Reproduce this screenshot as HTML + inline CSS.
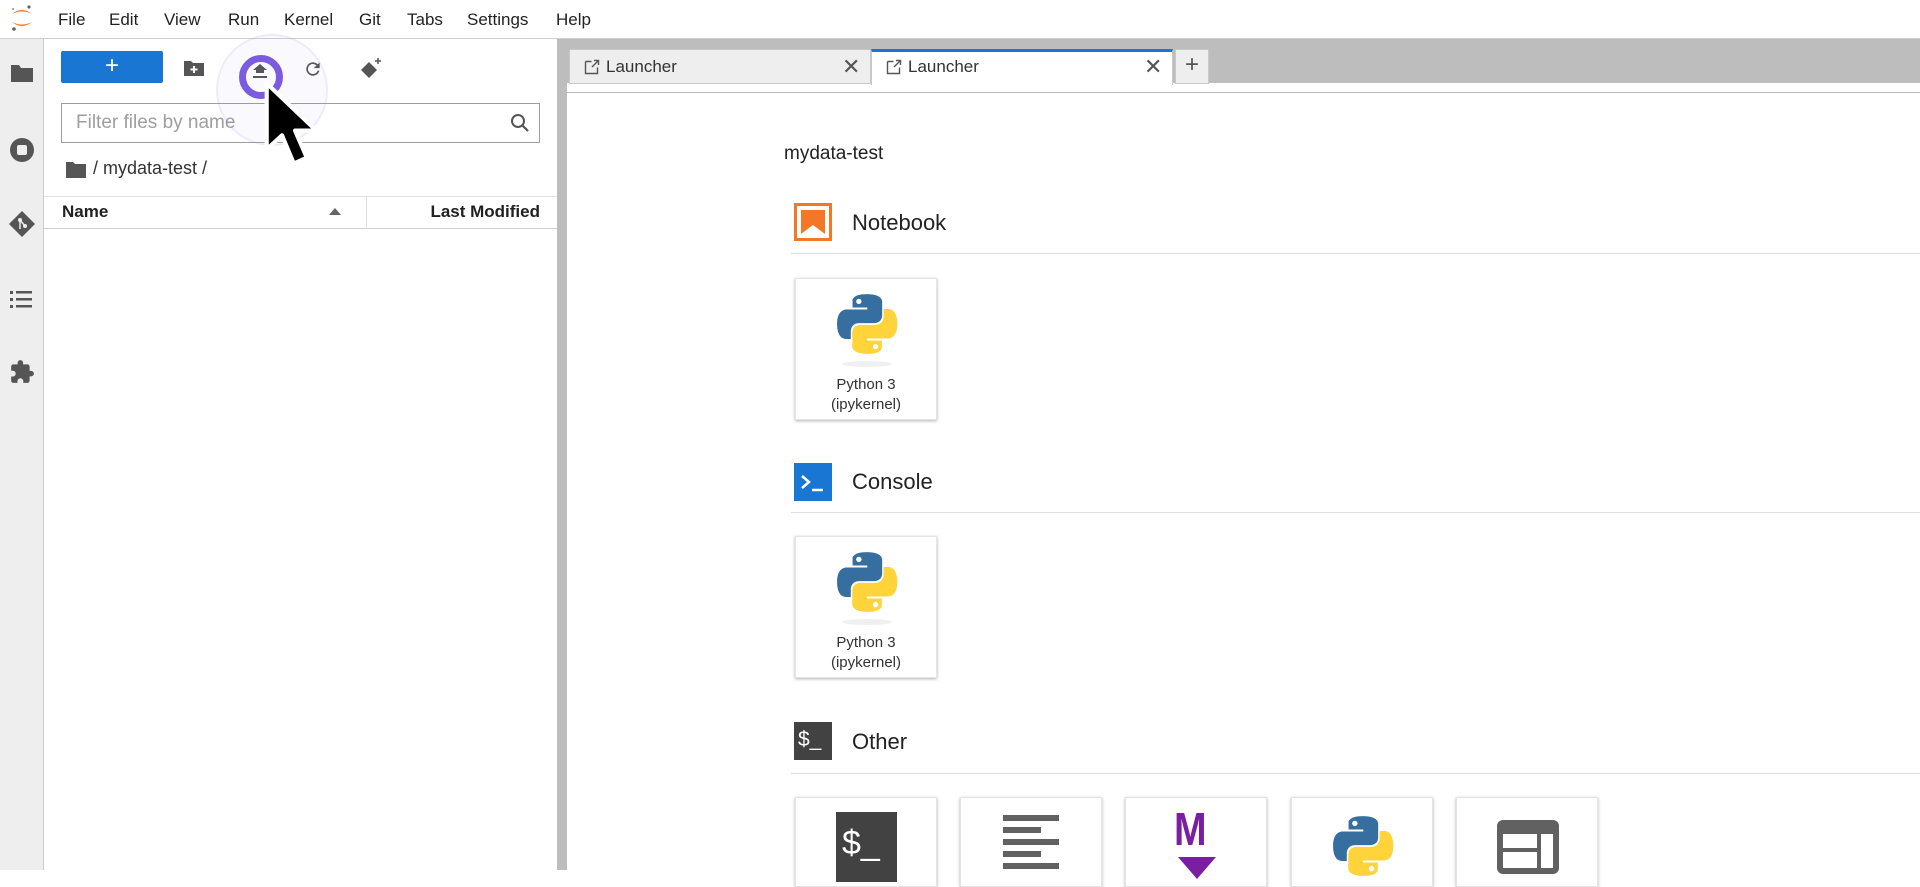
<!DOCTYPE html>
<html><head><meta charset="utf-8"><style>
*{box-sizing:border-box;margin:0;padding:0}
body{width:1920px;height:870px;overflow:hidden;background:#fff;font-family:"Liberation Sans",sans-serif;color:#212121;position:relative}
.abs{position:absolute}
.menu{left:0;top:0;width:1920px;height:39px;border-bottom:1px solid #d0d0d0;background:#fff}
.menu span{position:absolute;top:10px;font-size:17px;color:#222}
.side{left:0;top:39px;width:44px;height:831px;background:#eee;border-right:1px solid #ccc}
.panel{left:44px;top:39px;width:513px;height:831px;background:#fff}
.split{left:557px;top:39px;width:10px;height:831px;background:#bdbdbd}
.tabbar{left:567px;top:39px;width:1353px;height:54px;background:#bdbdbd}
.tab{top:49px;height:35px;background:#eee;border:1px solid #c8c8c8;font-size:17px;color:#333}
.tab .t{position:absolute;left:36px;top:7px}
.tab .x{position:absolute;top:4px;font-size:22px;color:#555}
.card{width:142px;background:#fff;box-shadow:0 1px 3px rgba(0,0,0,.3);border:1px solid #e4e4e4}
.card .lbl{position:absolute;width:100%;text-align:center;font-size:15px;color:#333;line-height:20px}
.hdr{font-size:22px;color:#222}
.div{height:1px;background:#e0e0e0;left:791px;width:1129px}
</style></head><body>
<div class="abs menu">
 <svg class="abs" style="left:9px;top:3px" width="26" height="30" viewBox="0 0 26 30"><path d="M3 11 Q13 3 23 11 Q13 6 3 11Z" fill="#f37726"/><path d="M3 19 Q13 27 23 19 Q13 24 3 19Z" fill="#f37726"/><circle cx="20" cy="4" r="1.6" fill="#666"/><circle cx="5" cy="26" r="1.8" fill="#666"/><circle cx="4" cy="6" r="1" fill="#888"/></svg>
 <span style="left:58px">File</span><span style="left:109px">Edit</span><span style="left:164px">View</span><span style="left:228px">Run</span><span style="left:284px">Kernel</span><span style="left:359px">Git</span><span style="left:407px">Tabs</span><span style="left:467px">Settings</span><span style="left:556px">Help</span>
</div>
<div class="abs side">
 <svg class="abs" style="left:10px;top:24px" width="24" height="20" viewBox="0 0 24 20"><path d="M1 2h8l2 3h12v14H1z" fill="#555"/></svg>
 <svg class="abs" style="left:9px;top:98px" width="26" height="26" viewBox="0 0 26 26"><circle cx="13" cy="13" r="12" fill="#555"/><rect x="8" y="8" width="10" height="10" rx="2" fill="#eee"/></svg>
 <svg class="abs" style="left:8px;top:171px" width="28" height="28" viewBox="0 0 28 28"><path d="M14 1 27 14 14 27 1 14Z" fill="#555"/><circle cx="12" cy="10" r="2" fill="#eee"/><circle cx="17" cy="16" r="2" fill="#eee"/><path d="M12 10v9M12 10l5 6" stroke="#eee" stroke-width="1.5"/></svg>
 <svg class="abs" style="left:10px;top:250px" width="24" height="20" viewBox="0 0 24 20"><g fill="#555"><rect x="0" y="2" width="3" height="3"/><rect x="0" y="9" width="3" height="3"/><rect x="0" y="16" width="3" height="3"/><rect x="6" y="2" width="16" height="2.5"/><rect x="6" y="9" width="16" height="2.5"/><rect x="6" y="16" width="16" height="2.5"/></g></svg>
 <svg class="abs" style="left:9px;top:320px" width="26" height="26" viewBox="0 0 24 24"><path d="M20.5 11H19V7a2 2 0 0 0-2-2h-4V3.5a2.5 2.5 0 0 0-5 0V5H4a2 2 0 0 0-2 2v3.8h1.5a2.7 2.7 0 0 1 0 5.4H2V20a2 2 0 0 0 2 2h3.8v-1.5a2.7 2.7 0 0 1 5.4 0V22H17a2 2 0 0 0 2-2v-4h1.5a2.5 2.5 0 0 0 0-5z" fill="#555"/></svg>
</div>
<div class="abs panel">
 <div class="abs" style="left:17px;top:12px;width:102px;height:32px;background:#1976d2;border-radius:2px;color:#fff;font-size:24px;text-align:center;line-height:30px">+</div>
 <svg class="abs" style="left:140px;top:21px" width="20" height="16" viewBox="0 0 20 16"><path d="M0 1h7l2 2h11v13H0z" fill="#555"/><path d="M10 6v7M6.5 9.5h7" stroke="#fff" stroke-width="2"/></svg>
 <svg class="abs" style="left:207px;top:25px" width="18" height="18" viewBox="0 0 18 18"><path d="M5 9V6H2l7-6 7 6h-3v3z M2 12h14v2H2z" fill="#555"/></svg>
 <svg class="abs" style="left:259px;top:20px" width="20" height="20" viewBox="0 0 24 24"><path d="M17.6 6.4A8 8 0 1 0 19.7 14h-2.1a6 6 0 1 1-1.4-6.2L13 11h7V4z" fill="#555"/></svg>
 <svg class="abs" style="left:316px;top:18px" width="24" height="24" viewBox="0 0 24 24"><path d="M9 5 17 13 9 21 1 13Z" fill="#555"/><path d="M18 1v6M15 4h6" stroke="#555" stroke-width="1.5"/></svg>
 <div class="abs" style="left:17px;top:64px;width:479px;height:40px;border:1px solid #9e9e9e;background:#fff"></div>
 <div class="abs" style="left:32px;top:73px;font-size:19px;color:#9e9e9e">Filter files by name</div>
 <svg class="abs" style="left:466px;top:74px" width="20" height="20" viewBox="0 0 20 20"><circle cx="8" cy="8" r="6" fill="none" stroke="#555" stroke-width="2"/><path d="M12.5 12.5 18 18" stroke="#555" stroke-width="2.2"/></svg>
 <svg class="abs" style="left:22px;top:122px" width="20" height="17" viewBox="0 0 20 17"><path d="M0 1h7l2 2h11v14H0z" fill="#555"/></svg>
 <div class="abs" style="left:49px;top:119px;font-size:18px;color:#333">/ mydata-test /</div>
 <div class="abs" style="left:0;top:157px;width:513px;height:33px;border-top:1px solid #e0e0e0;border-bottom:1px solid #d0d0d0"></div>
 <div class="abs" style="left:18px;top:163px;font-size:17px;font-weight:bold">Name</div>
 <div class="abs" style="left:285px;top:169px;width:0;height:0;border-left:6px solid transparent;border-right:6px solid transparent;border-bottom:7px solid #666"></div>
 <div class="abs" style="left:322px;top:157px;width:1px;height:33px;background:#e0e0e0"></div>
 <div class="abs" style="right:17px;top:163px;font-size:17px;font-weight:bold">Last Modified</div>
 <div class="abs" style="left:172px;top:-5px;width:112px;height:112px;border-radius:50%;border:2px solid rgba(140,120,240,.12);background:rgba(140,120,240,.04)"></div>
 <div class="abs" style="left:195px;top:16px;width:44px;height:44px;border-radius:50%;border:7px solid #7b5ce0"></div>
 <svg class="abs" style="left:218px;top:42px" width="66" height="92" viewBox="0 0 56 78"><path d="M4 2 L4 58 L17 46 L27 70 L38 65 L28 42 L46 42 Z" fill="#000" stroke="#fff" stroke-width="3.5" stroke-linejoin="round"/></svg>
</div>
<div class="abs split"></div>
<div class="abs tabbar"></div>
<div class="abs" style="left:567px;top:83px;width:1353px;height:10px;background:#fff;border-bottom:1px solid #bbb"></div>
<div class="abs tab" style="left:569px;width:302px"><svg class="abs" style="left:14px;top:9px" width="16" height="16" viewBox="0 0 16 16"><path d="M1.5 2.5h6M1.5 2.5v12h12v-6M8 8 14 2M10 1.5h4.5V6" stroke="#555" stroke-width="1.4" fill="none"/></svg><span class="t">Launcher</span><span class="x" style="left:272px">✕</span></div>
<div class="abs tab" style="left:871px;width:302px;background:#fff;border-top:3px solid #1976d2;border-bottom:none;height:36px"><svg class="abs" style="left:14px;top:7px" width="16" height="16" viewBox="0 0 16 16"><path d="M1.5 2.5h6M1.5 2.5v12h12v-6M8 8 14 2M10 1.5h4.5V6" stroke="#555" stroke-width="1.4" fill="none"/></svg><span class="t" style="top:5px">Launcher</span><span class="x" style="left:272px;top:2px">✕</span></div>
<div class="abs tab" style="left:1175px;width:34px;text-align:center"><span style="font-size:24px;line-height:30px;color:#555">+</span></div>

<div class="abs" style="left:784px;top:143px;font-size:19px;color:#222">mydata-test</div>

<svg class="abs" style="left:794px;top:203px" width="38" height="38" viewBox="0 0 38 38"><rect x="1.5" y="1.5" width="35" height="35" fill="none" stroke="#f37726" stroke-width="3"/><path d="M7 7h24v24l-12-9-12 9z" fill="#f37726"/></svg>
<div class="abs hdr" style="left:852px;top:210px">Notebook</div>
<div class="abs div" style="top:253px"></div>

<svg class="abs" style="left:794px;top:463px" width="38" height="38" viewBox="0 0 38 38"><rect width="38" height="38" fill="#1976d2"/><path d="M8 13l7 6-7 6" stroke="#fff" stroke-width="2.5" fill="none"/><path d="M18 27h11" stroke="#fff" stroke-width="2.5"/></svg>
<div class="abs hdr" style="left:852px;top:469px">Console</div>
<div class="abs div" style="top:512px"></div>

<div class="abs" style="left:794px;top:722px;width:38px;height:38px;background:#424242;color:#fff;font-size:21px;padding:6px 0 0 4px">$_</div>
<div class="abs hdr" style="left:852px;top:729px">Other</div>
<div class="abs div" style="top:773px"></div>

<svg width="0" height="0" style="position:absolute"><defs><g id="py"><path d="M31 2C16 2 17 8.5 17 8.5V15h14.3v2H11.5S2 16 2 31s8.3 14.5 8.3 14.5h5v-7s-.3-8.3 8.2-8.3h14.2s8 .1 8-7.7V9.8S47 2 31 2zm-7.9 4.5a2.6 2.6 0 1 1 0 5.2 2.6 2.6 0 0 1 0-5.2z" fill="#366f9f"/><path d="M31.4 60c15 0 14-6.5 14-6.5V47H31.1v-2h19.8S60.4 46 60.4 31s-8.3-14.5-8.3-14.5h-5v7s.3 8.3-8.2 8.3H24.7s-8-.1-8 7.7v12.7S15.4 60 31.4 60zm7.9-4.5a2.6 2.6 0 1 1 0-5.2 2.6 2.6 0 0 1 0 5.2z" fill="#ffd43b"/></g></defs></svg>

<div class="abs card" style="left:795px;top:278px;height:142px"><svg class="abs" style="left:39px;top:13px" width="64" height="64" viewBox="0 0 62 62"><use href="#py"/></svg><div class="abs" style="left:46px;top:82px;width:50px;height:6px;border-radius:50%;background:rgba(0,0,0,.06)"></div><div class="lbl" style="top:96px">Python 3<br>(ipykernel)</div></div>
<div class="abs card" style="left:795px;top:536px;height:142px"><svg class="abs" style="left:39px;top:13px" width="64" height="64" viewBox="0 0 62 62"><use href="#py"/></svg><div class="abs" style="left:46px;top:82px;width:50px;height:6px;border-radius:50%;background:rgba(0,0,0,.06)"></div><div class="lbl" style="top:96px">Python 3<br>(ipykernel)</div></div>

<div class="abs card" style="left:795px;top:797px;height:90px"><div class="abs" style="left:40px;top:14px;width:61px;height:70px;background:#424242;color:#fff;font-size:34px;padding:12px 0 0 6px">$_</div></div>
<div class="abs card" style="left:960px;top:797px;height:90px"><svg class="abs" style="left:42px;top:17px" width="58" height="60" viewBox="0 0 58 60"><g fill="#616161"><rect x="0" y="0" width="56" height="6"/><rect x="0" y="12" width="38" height="6"/><rect x="0" y="24" width="56" height="6"/><rect x="0" y="36" width="38" height="6"/><rect x="0" y="48" width="56" height="6"/></g></svg></div>
<div class="abs card" style="left:1125px;top:797px;height:90px"><div class="abs" style="left:48px;top:4px;font-size:46px;font-weight:bold;color:#7b1fa2;transform:scaleX(.85);transform-origin:left">M</div><div class="abs" style="left:52px;top:59px;width:0;height:0;border-left:19px solid transparent;border-right:19px solid transparent;border-top:22px solid #7b1fa2"></div></div>
<div class="abs card" style="left:1291px;top:797px;height:90px"><svg class="abs" style="left:39px;top:16px" width="64" height="64" viewBox="0 0 62 62"><use href="#py"/></svg></div>
<div class="abs card" style="left:1456px;top:797px;height:90px"><svg class="abs" style="left:40px;top:22px" width="62" height="54" viewBox="0 0 62 54"><rect width="62" height="54" rx="6" fill="#616161"/><rect x="6" y="14" width="34" height="14" fill="#fff"/><rect x="6" y="32" width="34" height="16" fill="#fff"/><rect x="44" y="14" width="12" height="34" fill="#fff"/></svg></div>
</body></html>
